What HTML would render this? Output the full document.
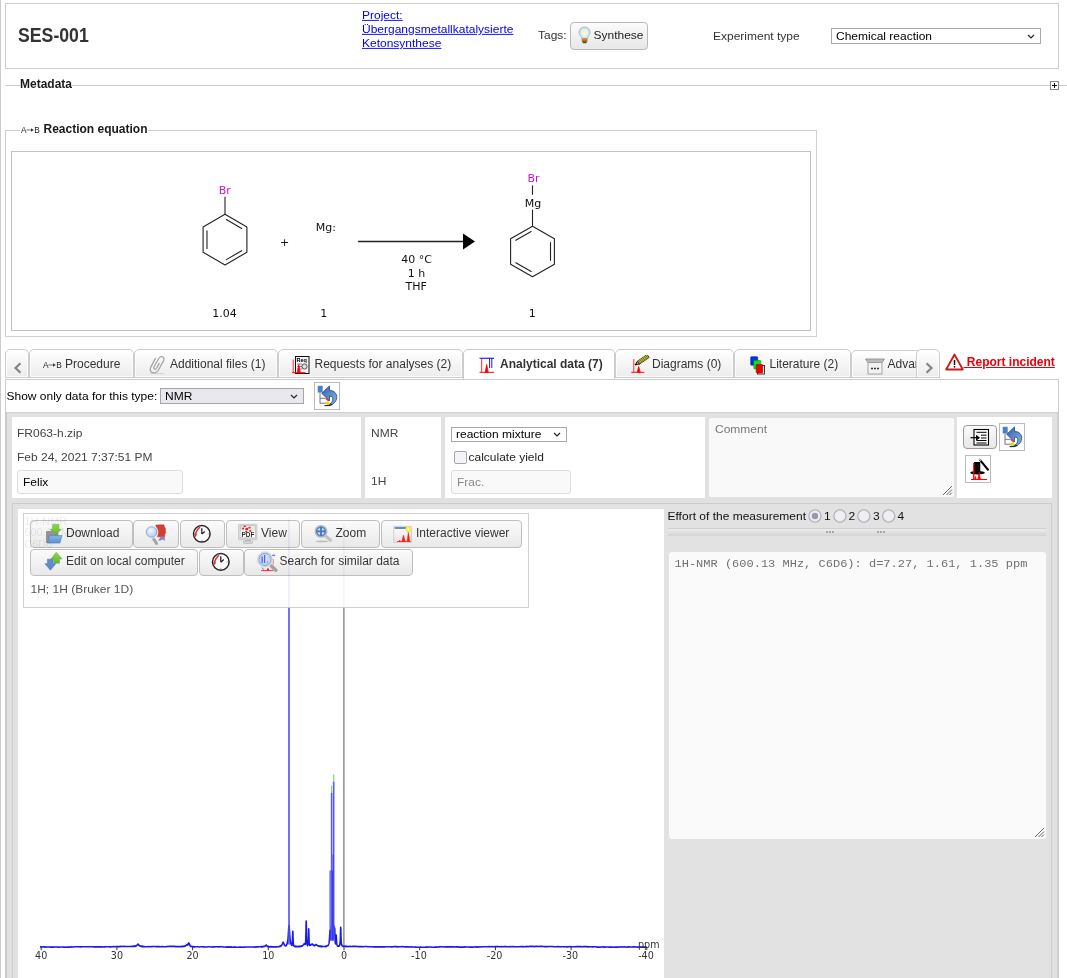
<!DOCTYPE html>
<html><head><meta charset="utf-8"><title>SES-001</title>
<style>
*{box-sizing:border-box;margin:0;padding:0}
html,body{width:1067px;height:978px;overflow:hidden;background:#fff}
body{font-family:"Liberation Sans",sans-serif;font-size:12px;color:#333;position:relative}
.abs{position:absolute}
.t{position:absolute;white-space:nowrap;line-height:14px}
.h{transform:scaleY(.9);transform-origin:0 11.160px}
.btn{position:absolute;border:1px solid #b9b9b9;border-radius:4px;background:linear-gradient(#fbfbfb,#e7e7e7);height:28px}
.btn .t{color:#222;top:4.800px}
.btn svg{position:absolute}
.sel{position:absolute;border:1px solid #a9a9a9;background:#fff}
.sel .t{color:#000;left:4px}
.sel svg{position:absolute;right:5px;top:5px}
.tab{position:absolute;top:349px;height:29px;border:1px solid #ccc;border-radius:5px 5px 0 0;background:linear-gradient(#fff,#ececec);box-shadow:inset 0 0 0 1px rgba(255,255,255,.75)}
.tab .t{top:7px;color:#333}
.tab svg{position:absolute}
.cell{position:absolute;background:#fff;top:417px;height:81px}
.ib{position:absolute;border:1px solid #bbb;background:#fff}
.rad{position:absolute;width:13.500px;height:13.500px;border:1.300px solid #b3b3bf;border-radius:50%;background:#efeff2;top:509.200px}
svg text{font-family:"DejaVu Sans",sans-serif}
#w{position:relative;width:1067px;height:978px;overflow:hidden;will-change:transform;background:#fff}
</style></head><body><div id="w">
<!-- left page line -->
<div class="abs" style="left:0;top:0;width:1px;height:978px;background:#ccc"></div>

<!-- header box -->
<div class="abs" style="left:5px;top:3px;width:1054px;height:66px;border:1px solid #ccc"></div>
<div class="t" style="left:17.5px;top:23px;font-size:20px;font-weight:bold;line-height:24px;transform:scaleX(.884);transform-origin:0 0">SES-001</div>
<div class="t h" style="left:362px;top:8px;color:#00e;text-decoration:underline">Project:</div><div class="t h" style="left:362px;top:22px;color:#00e;text-decoration:underline">Übergangsmetallkatalysierte</div><div class="t h" style="left:362px;top:36px;color:#00e;text-decoration:underline">Ketonsynthese</div>
<div class="t h" style="left:538px;top:28px">Tags:</div>
<div class="btn" style="left:570px;top:22px;width:78px"><div class="t h" style="left:22.500px;top:5px">Synthese</div>
<svg style="left:6.800px;top:2.600px" width="13.200" height="18.500" viewBox="0 0 15 21"><defs><radialGradient id="bulb" cx=".5" cy=".5" r=".6"><stop offset="0" stop-color="#fffcc8"/><stop offset=".4" stop-color="#eef4d8"/><stop offset=".75" stop-color="#c4dcf2"/><stop offset="1" stop-color="#8ab4de"/></radialGradient></defs><path d="M7.5 1C3.6 1 1.2 3.8 1.2 7c0 2.6 1.6 3.8 2.5 5.6.4.8.5 1.6.5 2.2h6.6c0-.6.1-1.4.5-2.2.9-1.8 2.5-3 2.5-5.6 0-3.2-2.400-6-6.300-6z" fill="url(#bulb)" stroke="#8fb7d9" stroke-width=".8"/><rect x="4.300" y="14.200" width="6.400" height="4" rx="1" fill="#b06a12"/><rect x="5.200" y="17.800" width="4.600" height="1.800" rx=".8" fill="#6e3c06"/><path d="M4.300 15.600h6.400" stroke="#e0a040" stroke-width=".7"/></svg></div>
<div class="t h" style="left:713px;top:29px">Experiment type</div>
<div class="sel" style="left:831px;top:28px;width:210px;height:16px"><div class="t h" style="top:0">Chemical reaction</div><svg width="8" height="6" viewBox="0 0 8 6"><path d="M1 1l3 3 3-3" fill="none" stroke="#222" stroke-width="1.200"/></svg></div>

<!-- Metadata -->
<div class="abs" style="left:5px;top:85px;width:1062px;height:1px;background:#ccc"></div>
<div class="t" style="left:20px;top:77px;font-weight:bold;color:#1a1a1a;background:#fff">Metadata</div>
<div class="abs" style="left:1050px;top:81px;width:9px;height:9px;border:1px solid #888;background:#fff"><div class="abs" style="left:1px;top:3px;width:5px;height:1px;background:#000"></div><div class="abs" style="left:3px;top:1px;width:1px;height:5px;background:#000"></div></div>

<!-- Reaction equation -->
<div class="abs" style="left:5px;top:130px;width:812px;height:207px;border:1px solid #d0d0d0"></div>
<div class="t" style="left:20px;top:122px;font-weight:bold;color:#1a1a1a;background:#fff;padding:0 0 0 23.500px">Reaction equation<svg style="position:absolute;left:1px;top:4px" width="19" height="8" viewBox="0 0 19 8"><text x="0" y="7" font-size="8.300" fill="#222" style="font-family:'Liberation Sans',sans-serif;font-weight:normal">A</text><text x="13.200" y="7" font-size="8.300" fill="#222" style="font-family:'Liberation Sans',sans-serif;font-weight:normal">B</text><path d="M5.300 4h5.500" stroke="#777" stroke-width="1"/><path d="M10 2.300l2.800 1.700l-2.800 1.700z" fill="#333"/></svg></div>
<div class="abs" style="left:11px;top:151px;width:800px;height:180px;border:1px solid #c2c2c2"></div>
<!--SCHEME_S-->
<svg class="abs" style="left:0;top:0" width="1067" height="345" viewBox="0 0 1067 345">
<g stroke="#222" stroke-width="1.1" stroke-linejoin="round" stroke-linecap="round">
<polygon points="225.00,214.30 246.91,226.95 246.91,252.25 225.00,264.90 203.09,252.25 203.09,226.95" fill="none"/>
<line x1="226.34" y1="219.57" x2="241.67" y2="228.43"/>
<line x1="241.67" y1="250.77" x2="226.34" y2="259.63"/>
<line x1="206.99" y1="248.45" x2="206.99" y2="230.75"/>
<line x1="225" y1="214.3" x2="225" y2="197"/>
<polygon points="532.50,226.20 554.41,238.85 554.41,264.15 532.50,276.80 510.59,264.15 510.59,238.85" fill="none"/>
<line x1="550.51" y1="242.64" x2="550.51" y2="260.35"/>
<line x1="531.16" y1="271.53" x2="515.83" y2="262.67"/>
<line x1="515.83" y1="240.33" x2="531.16" y2="231.47"/>
<line x1="532.5" y1="226.2" x2="532.5" y2="210"/>
<line x1="532.5" y1="194.2" x2="532.5" y2="185.7"/>
<line x1="358.5" y1="241.5" x2="464" y2="241.5" stroke-width="1.3"/>
</g>
<polygon points="463,233.6 475,241.5 463,249.4" fill="#000"/>
<g font-size="11px" fill="#111" text-anchor="middle">
<text x="224.8" y="194" fill="#c818c8">Br</text>
<text x="284.6" y="245.6">+</text>
<text x="325.800" y="231.300">Mg:</text>
<text x="224.400" y="316.800">1.04</text>
<text x="323.800" y="316.800">1</text>
<text x="416.600" y="263">40 °C</text>
<text x="416.600" y="276.800">1 h</text>
<text x="416.200" y="289.800">THF</text>
<text x="533.600" y="181.900" fill="#c818c8">Br</text>
<text x="533.100" y="206.600">Mg</text>
<text x="532.300" y="316.800">1</text>
</g></svg>
<!--SCHEME_E-->

<!-- tab strip -->
<div class="abs" style="left:5px;top:377px;width:935px;height:1px;background:#ccc"></div>
<div class="tab" style="left:5px;width:24px"><svg style="left:7px;top:12px" width="10" height="12" viewBox="0 0 10 12"><path d="M7.500 1.200L2.500 6l5 4.800" fill="none" stroke="#858585" stroke-width="2.200"/></svg></div>
<div class="tab" style="left:29px;width:105px"><svg style="left:13px;top:11.300px" width="19" height="8" viewBox="0 0 19 8"><text x="0" y="7" font-size="8.300" fill="#222" style="font-family:'Liberation Sans',sans-serif">A</text><text x="13.200" y="7" font-size="8.300" fill="#222" style="font-family:'Liberation Sans',sans-serif">B</text><path d="M5.300 4h5.500" stroke="#777" stroke-width="1"/><path d="M10 2.300l2.800 1.700l-2.800 1.700z" fill="#333"/></svg><div class="t" style="left:35px">Procedure</div></div>
<div class="tab" style="left:134px;width:144px"><svg style="left:13px;top:5px" width="19" height="20" viewBox="0 0 19 20"><ellipse cx="9" cy="18.400" rx="8" ry=".7" fill="#d4d4d4"/><path d="M7.400 3.400L2.600 12.600C1 16 4 18.500 7 17.800C8.500 17.400 9.300 16.800 10.200 15.500L15.600 5.600C17 3 14.800 .8 12.600 1.800C11.800 2.200 11.200 2.800 10.600 3.800L6 11.800C5.200 13.500 6.600 14.800 7.800 14C8.200 13.700 8.500 13.300 8.800 12.800L11.200 8.400" fill="none" stroke="#a3a5a1" stroke-width="1.250" stroke-linecap="round" stroke-linejoin="round"/></svg><div class="t" style="left:35px">Additional files (1)</div></div>
<div class="tab" style="left:278px;width:185px"><svg style="left:12px;top:6px" width="20" height="19" viewBox="0 0 20 19"><rect x="4.500" y=".5" width="13.500" height="17" fill="#f4f4f4" stroke="#111"/><text x="5.500" y="5.800" font-size="5.500" font-weight="bold" fill="#000" style="font-family:'Liberation Sans',sans-serif">Req</text><path d="M6 8h5M6 10.500h5M6 13h5" stroke="#777" stroke-width=".8"/><circle cx="13.500" cy="10.500" r="2.600" fill="#ddd" stroke="#444" stroke-width=".9"/><path d="M2.200 3.500V16.500" stroke="#f33" stroke-width="1"/><path d="M1 16.700h13.500" stroke="#f00" stroke-width="1"/><path d="M6.300 16.500L7.800 8.500 9.300 16.500z" fill="#f00" stroke="#f00" stroke-width=".8"/></svg><div class="t" style="left:35.5px">Requests for analyses (2)</div></div>
<div class="tab" style="left:463px;width:152px;height:30px;background:#fff;border-bottom:none"><svg style="left:15px;top:7px" width="16" height="17" viewBox="0 0 16 17"><path d="M.5 1.300H15" stroke="#22f" stroke-width="1.200"/><path d="M10.600 1.300V11M12.800 1.300V11" stroke="#00f" stroke-width=".9"/><path d="M2.700 2V15.500" stroke="#f22" stroke-width="1"/><path d="M.5 15.300h14.500" stroke="#f00" stroke-width="1"/><path d="M6.200 15.300L7.700 7.500 9.200 15.300z" fill="#f00" stroke="#f00" stroke-width=".8"/></svg><div class="t" style="left:36px;font-weight:bold">Analytical data (7)</div></div>
<div class="tab" style="left:615px;width:119px"><svg style="left:15px;top:5px" width="19" height="19" viewBox="0 0 19 19"><path d="M2.800 4V17.200" stroke="#f33" stroke-width="1"/><path d="M.3 17.300h13" stroke="#f00" stroke-width="1"/><path d="M6.200 17.200L7.700 11.500 9.200 17.200z" fill="#f00" stroke="#f00" stroke-width=".8"/><path d="M6.300 6.250L16.200 -.5L18.200 2.500L8.300 9.250z" fill="#ece020" stroke="#222" stroke-width=".8"/><path d="M7 7.300l10 -6.800M7.700 8.400l10 -6.800" stroke="#333" stroke-width=".6"/><path d="M4 10L6.300 6.250L8.300 9.250z" fill="#d8a878" stroke="#111" stroke-width=".8"/><path d="M4 10l1.300 -2.100l1.100 1.700z" fill="#000"/></svg><div class="t" style="left:36px">Diagrams (0)</div></div>
<div class="tab" style="left:734px;width:117px"><svg style="left:15px;top:6px" width="16" height="19" viewBox="0 0 16 19"><rect x="7.500" y="9.500" width="7" height="8.500" fill="#fff" stroke="#222" stroke-width=".9"/><rect x=".7" y=".7" width="7" height="8.500" rx=".8" fill="#03d" stroke="#02a" stroke-width=".6"/><rect x="3.800" y="4.500" width="7" height="8.500" rx=".8" fill="#1d1" stroke="#0a0" stroke-width=".6"/><rect x="6.200" y="8.500" width="6.500" height="8.500" rx=".8" fill="#e00" stroke="#a00" stroke-width=".6"/></svg><div class="t" style="left:34.5px">Literature (2)</div></div>
<div class="tab" style="left:851px;width:71px;overflow:hidden;top:350px;height:28px"><svg style="left:13px;top:7px" width="20" height="17" viewBox="0 0 20 17"><path d="M.5 1h19l-2.500 3.500h-14z" fill="#bbb" stroke="#888" stroke-width=".8"/><rect x="3" y="4.500" width="14" height="11.500" fill="#f2f2f2" stroke="#999" stroke-width=".9"/><path d="M6 10.500h2M9 10.500h2M12 10.500h2" stroke="#333" stroke-width="1.600"/></svg><div class="t" style="left:35.5px;top:6px">Advanced</div></div>
<div class="tab" style="left:916px;width:24px;z-index:2"><svg style="left:7px;top:12px" width="10" height="12" viewBox="0 0 10 12"><path d="M2.500 1.200L7.500 6l-5 4.800" fill="none" stroke="#858585" stroke-width="2.200"/></svg></div>
<svg class="abs" style="left:945px;top:353px" width="19" height="18" viewBox="0 0 19 18"><path d="M9.500 1.500L17.800 16.500H1.200z" fill="#fff" stroke="#d01818" stroke-width="1.800" stroke-linejoin="round"/><path d="M9.500 7v5" stroke="#111" stroke-width="1.500"/><circle cx="9.500" cy="13.800" r=".9" fill="#111"/></svg>
<div class="t" style="left:963.500px;top:355px;font-weight:bold;color:#e8000a;text-decoration:underline;font-size:12px;white-space:pre"> Report incident</div>
<!-- main panel -->
<div class="abs" style="left:5px;top:379px;width:1054px;height:600px;border:1px solid #ccc;background:#fff"></div>
<div class="t h" style="left:6.500px;top:389px;color:#000">Show only data for this type:</div>
<div class="sel" style="left:160px;top:388px;width:144px;height:16px;background:#e9e9ed;border-color:#a5a5ad"><div class="t h" style="top:0">NMR</div><svg width="8" height="6" viewBox="0 0 8 6"><path d="M1 1l3 3 3-3" fill="none" stroke="#222" stroke-width="1.200"/></svg></div>
<div class="ib" style="left:314px;top:382px;width:26px;height:28px"></div>

<!-- gray data area -->
<div class="abs" style="left:6px;top:412px;width:1052px;height:566px;background:#e1e1e1;border-top:1px solid #d0d0d0"></div>
<div class="abs" style="left:6px;top:412px;width:1px;height:566px;background:#c8c8c8"></div>
<div class="cell" style="left:12px;width:349px"></div>
<div class="cell" style="left:365px;width:76px"></div>
<div class="cell" style="left:445px;width:260px"></div>
<div class="cell" style="left:957px;width:95px"></div>
<div class="t h" style="left:17px;top:426px;color:#444">FR063-h.zip</div>
<div class="t h" style="left:17px;top:450px;color:#444">Feb 24, 2021 7:37:51 PM</div>
<div class="abs" style="left:17px;top:470px;width:166px;height:24px;border:1px solid #ddd;border-radius:3px;background:#f9f9f9"></div>
<div class="t h" style="left:23px;top:475px;color:#000">Felix</div>
<div class="t h" style="left:371px;top:426px;color:#444">NMR</div>
<div class="t h" style="left:371px;top:474px;color:#444">1H</div>
<div class="sel" style="left:451px;top:427px;width:116px;height:15px"><div class="t h" style="top:-1px;left:4px">reaction mixture</div><svg width="8" height="6" viewBox="0 0 8 6" style="top:4px"><path d="M1 1l3 3 3-3" fill="none" stroke="#222" stroke-width="1.200"/></svg></div>
<div class="abs" style="left:454px;top:451px;width:13px;height:13px;border:1px solid #a5a5b0;border-radius:2px;background:#f4f4f6"></div>
<div class="t h" style="left:468.500px;top:450px;color:#222">calculate yield</div>
<div class="abs" style="left:451px;top:470px;width:120px;height:24px;border:1px solid #ddd;border-radius:3px;background:#f9f9f9"></div>
<div class="t h" style="left:457px;top:475px;color:#888">Frac.</div>
<!-- comment textarea -->
<div class="abs" style="left:709px;top:418px;width:245px;height:79px;background:#f9f9f9;border-radius:2px"></div>
<div class="t h" style="left:715px;top:422px;color:#777">Comment</div>
<svg class="abs" style="left:942px;top:485px" width="11" height="11" viewBox="0 0 11 11"><path d="M1 10L10 1M4.500 10L10 4.500M7.500 10L10 7.500" stroke="#666" stroke-width="1"/></svg>
<!-- right buttons -->
<div class="btn" style="left:963px;top:425px;width:34px;height:24px;border-color:#999"><svg style="left:5.200px;top:2px" width="22" height="19" viewBox="0 0 22 19"><rect x="5" y="1.500" width="14.500" height="15.500" fill="#fdfdfd" stroke="#000" stroke-width="1.100"/><path d="M7.500 4.300h10M12 7.200h5.500M12 10h5.500M7.500 12.500h10M7.500 15h10" stroke="#000" stroke-width="1"/><path d="M1.500 9.700h8.500" stroke="#000" stroke-width="1.200"/><path d="M7 6.700l4 3-4 3z" fill="#000"/></svg></div>
<div class="ib" style="left:999px;top:423px;width:26px;height:28px"></div>
<div class="ib" style="left:965px;top:455px;width:26px;height:28px"><svg class="abs" style="left:2px;top:2px" width="21" height="23" viewBox="0 0 21 23"><rect x="6" y="4" width="6.300" height="11" fill="#000"/><ellipse cx="9.500" cy="14.800" rx="7.300" ry="1.700" fill="#000"/><path d="M11.500 1.300l9 11" stroke="#000" stroke-width="2"/><path d="M11.200 .8l1.600 1.900" stroke="#bbb" stroke-width="1.600"/><path d="M5.800 5v16.500" stroke="#f00" stroke-width="1.400"/><path d="M3 21.500h16" stroke="#f00" stroke-width="1"/><path d="M9.800 21.500l1.300-7 1.300 7zM6.600 21.500l.8-3 .8 3z" fill="#f00" stroke="#f00" stroke-width=".8"/></svg></div>

<!-- second row panel -->
<div class="abs" style="left:12px;top:503px;width:1040px;height:480px;border:1px solid #ccc;background:#e2e2e2"></div>
<div class="abs" style="left:18px;top:508.500px;width:646px;height:470px;background:#fff"></div>
<svg class="abs" style="left:18px;top:508.500px" width="646" height="469.500" viewBox="18 508.500 646 469.500">
<path d="M343.900 523V946" stroke="#777" stroke-width="1.250"/>
<path d="M40.0 946.4 L41.5 946.4 L43.0 946.5 L44.5 946.4 L46.0 946.6 L47.5 946.5 L49.0 946.5 L50.5 946.6 L52.0 946.5 L53.5 946.6 L55.0 946.5 L56.5 946.5 L58.0 946.6 L59.5 946.7 L61.0 946.5 L62.5 946.5 L64.0 946.6 L65.5 946.7 L67.0 946.6 L68.5 946.5 L70.0 946.6 L71.5 946.3 L73.0 946.5 L74.5 946.3 L76.0 946.3 L77.5 946.2 L79.0 946.3 L80.5 946.4 L82.0 946.2 L83.5 946.3 L85.0 946.3 L86.5 946.3 L88.0 946.3 L89.5 946.2 L91.0 946.2 L92.5 946.3 L94.0 946.4 L95.5 946.4 L97.0 946.3 L98.5 946.4 L100.0 946.4 L101.5 946.3 L103.0 946.5 L104.5 946.4 L106.0 946.3 L107.5 946.3 L109.0 946.3 L110.5 946.4 L112.0 946.3 L113.5 946.1 L115.0 946.3 L116.5 946.0 L118.0 946.1 L119.5 946.1 L121.0 945.9 L122.5 946.0 L124.0 945.8 L125.5 946.0 L127.0 946.0 L128.5 946.0 L130.0 946.0 L131.5 945.9 L133.0 945.9 L133.1 945.9 L133.2 945.9 L133.3 945.9 L133.4 946.0 L133.5 946.0 L133.6 945.8 L133.7 945.9 L133.8 945.7 L133.9 945.9 L134.0 945.9 L134.1 946.0 L134.2 945.9 L134.3 945.7 L134.4 945.8 L134.5 945.8 L134.6 945.6 L134.7 945.7 L134.8 945.6 L134.9 945.6 L135.0 945.6 L135.1 945.8 L135.2 945.6 L135.3 945.6 L135.4 945.6 L135.5 945.7 L135.6 945.4 L135.7 945.5 L135.8 945.5 L135.9 945.6 L136.0 945.5 L136.1 945.5 L136.2 945.3 L136.3 945.3 L136.4 945.2 L136.5 945.3 L136.6 945.2 L136.7 944.9 L136.8 944.8 L136.9 944.7 L137.0 944.6 L137.1 944.6 L137.2 944.5 L137.3 944.3 L137.4 944.1 L137.5 944.1 L137.6 944.0 L137.7 943.9 L137.8 944.0 L137.9 943.8 L138.0 943.8 L138.1 943.8 L138.2 943.9 L138.3 943.8 L138.4 944.1 L138.5 944.2 L138.6 944.3 L138.7 944.4 L138.8 944.5 L138.9 944.6 L139.0 944.6 L139.1 944.9 L139.2 944.8 L139.3 944.9 L139.4 945.0 L139.5 945.1 L139.6 945.2 L139.7 945.2 L139.8 945.2 L139.9 945.3 L140.0 945.4 L140.1 945.5 L140.2 945.4 L140.3 945.7 L140.4 945.7 L140.5 945.6 L140.6 945.6 L140.7 945.7 L140.8 945.7 L140.9 945.7 L141.0 945.9 L141.1 946.0 L141.2 945.8 L141.3 945.8 L141.4 945.7 L141.5 945.8 L141.6 945.8 L141.7 945.8 L141.8 946.0 L141.9 945.8 L142.0 945.8 L142.1 946.1 L142.2 946.0 L142.3 945.9 L142.4 946.0 L142.5 945.8 L142.6 946.0 L142.7 946.1 L142.8 946.1 L142.9 946.1 L143.0 945.9 L143.1 946.0 L143.2 945.9 L143.3 946.1 L143.4 946.0 L143.5 946.1 L143.6 946.0 L143.7 946.0 L143.8 946.1 L143.9 946.2 L144.0 946.2 L144.1 946.1 L145.6 946.2 L147.1 946.2 L148.6 946.1 L150.1 946.2 L151.6 946.1 L153.1 946.0 L154.6 946.0 L156.1 946.1 L157.6 946.0 L159.1 946.1 L160.6 946.2 L162.1 946.0 L163.6 946.2 L165.1 946.2 L166.6 946.1 L168.1 946.0 L169.6 945.9 L171.1 945.9 L172.6 945.9 L174.1 945.9 L175.6 946.1 L177.1 946.1 L178.6 946.1 L180.1 946.0 L181.6 946.1 L181.7 946.1 L181.8 945.9 L181.9 946.1 L182.0 946.1 L182.1 946.1 L182.2 946.1 L182.3 946.0 L182.4 945.9 L182.5 946.1 L182.6 945.9 L182.7 946.1 L182.8 946.1 L182.9 945.9 L183.0 945.9 L183.1 946.1 L183.2 946.0 L183.3 945.8 L183.4 945.8 L183.5 945.8 L183.6 946.0 L183.7 946.0 L183.8 945.8 L183.9 945.9 L184.0 946.0 L184.1 945.9 L184.2 945.7 L184.3 945.8 L184.4 945.6 L184.5 945.6 L184.6 945.8 L184.7 945.7 L184.8 945.6 L184.9 945.7 L185.0 945.5 L185.1 945.6 L185.2 945.5 L185.3 945.3 L185.4 945.2 L185.5 945.2 L185.6 945.1 L185.7 945.1 L185.8 945.0 L185.9 944.9 L186.0 944.8 L186.1 944.9 L186.2 944.7 L186.3 944.6 L186.4 944.6 L186.5 944.6 L186.6 944.4 L186.7 944.5 L186.8 944.3 L186.9 944.3 L187.0 944.3 L187.1 944.2 L187.2 944.3 L187.3 944.3 L187.4 944.3 L187.5 944.6 L187.6 944.5 L187.7 944.5 L187.8 944.4 L187.9 944.1 L188.0 943.8 L188.1 943.6 L188.2 943.3 L188.3 943.1 L188.4 942.6 L188.5 942.5 L188.6 942.3 L188.7 942.3 L188.8 942.5 L188.9 942.5 L189.0 942.8 L189.1 943.1 L189.2 943.4 L189.3 943.6 L189.4 943.9 L189.5 944.1 L189.6 944.4 L189.7 944.6 L189.8 944.7 L189.9 944.9 L190.0 945.1 L190.1 945.3 L190.2 945.4 L190.3 945.5 L190.4 945.6 L190.5 945.5 L190.6 945.7 L190.7 945.8 L190.8 945.9 L190.9 945.7 L191.0 945.7 L191.1 945.9 L191.2 945.8 L191.3 945.9 L191.4 945.9 L191.5 946.1 L191.6 946.1 L191.7 946.2 L191.8 946.0 L191.9 946.2 L192.0 946.2 L192.1 946.0 L192.2 946.3 L192.3 946.3 L192.4 946.1 L192.5 946.3 L192.6 946.2 L192.7 946.2 L192.8 946.4 L192.9 946.3 L193.0 946.1 L193.1 946.2 L193.2 946.3 L193.3 946.2 L193.4 946.2 L193.5 946.2 L193.6 946.3 L193.7 946.1 L193.8 946.3 L193.9 946.3 L194.0 946.2 L194.1 946.3 L194.2 946.3 L194.3 946.3 L194.4 946.2 L194.5 946.5 L194.6 946.4 L194.7 946.5 L194.8 946.2 L196.3 946.3 L197.8 946.3 L199.3 946.5 L200.8 946.3 L202.3 946.3 L203.8 946.4 L205.3 946.5 L206.8 946.5 L208.3 946.3 L209.8 946.2 L211.3 946.5 L212.8 946.4 L214.3 946.4 L215.8 946.2 L217.3 946.2 L218.8 946.4 L220.3 946.3 L221.8 946.3 L223.3 946.5 L224.8 946.5 L226.3 946.6 L227.8 946.4 L229.3 946.6 L230.8 946.4 L232.3 946.7 L233.8 946.6 L235.3 946.6 L236.8 946.7 L238.3 946.8 L239.8 946.6 L241.3 946.6 L242.8 946.7 L244.3 946.6 L245.8 946.5 L247.3 946.5 L248.8 946.5 L250.3 946.5 L251.8 946.5 L253.3 946.5 L254.8 946.6 L256.3 946.4 L257.8 946.4 L259.3 946.3 L260.8 946.3 L260.9 946.2 L261.0 946.3 L261.1 946.2 L261.2 946.4 L261.3 946.3 L261.4 946.2 L261.5 946.3 L261.6 946.4 L261.7 946.2 L261.8 946.4 L261.9 946.3 L262.0 946.3 L262.1 946.4 L262.2 946.2 L262.3 946.3 L262.4 946.3 L262.5 946.4 L262.6 946.2 L262.7 946.3 L262.8 946.3 L262.9 946.3 L263.0 946.2 L263.1 946.2 L263.2 946.1 L263.3 946.1 L263.4 946.0 L263.5 946.2 L263.6 946.1 L263.7 946.0 L263.8 946.0 L263.9 946.2 L264.0 946.1 L264.1 946.1 L264.2 945.9 L264.3 945.9 L264.4 945.8 L264.5 945.8 L264.6 945.7 L264.7 945.7 L264.8 945.6 L264.9 945.7 L265.0 945.7 L265.1 945.4 L265.2 945.3 L265.3 945.4 L265.4 945.1 L265.5 945.0 L265.6 944.8 L265.7 944.8 L265.8 944.7 L265.9 944.7 L266.0 944.6 L266.1 944.7 L266.2 944.6 L266.3 944.7 L266.4 944.8 L266.5 945.0 L266.6 945.0 L266.7 945.1 L266.8 945.3 L266.9 945.4 L267.0 945.5 L267.1 945.6 L267.2 945.8 L267.3 945.8 L267.4 945.9 L267.5 946.0 L267.6 945.9 L267.7 945.9 L267.8 946.1 L267.9 945.9 L268.0 946.1 L268.1 946.1 L268.2 945.9 L268.3 946.2 L268.4 946.2 L268.5 946.2 L268.6 946.2 L268.7 946.3 L268.8 946.1 L268.9 946.2 L269.0 946.2 L269.1 946.3 L269.2 946.3 L269.3 946.3 L269.4 946.3 L269.5 946.4 L269.6 946.3 L269.7 946.3 L269.8 946.2 L269.9 946.1 L270.0 946.2 L270.1 946.2 L270.2 946.2 L270.3 946.4 L270.4 946.3 L270.5 946.3 L270.6 946.4 L270.7 946.4 L270.8 946.3 L270.9 946.2 L271.0 946.4 L271.1 946.4 L271.2 946.3 L271.3 946.3 L271.4 946.4 L271.5 946.2 L271.6 946.4 L271.7 946.3 L271.8 946.2 L271.9 946.3 L272.0 946.4 L273.5 946.3 L275.0 946.4 L276.5 946.4 L278.0 946.2 L278.1 946.2 L278.2 946.2 L278.3 946.2 L278.4 946.3 L278.5 946.2 L278.6 946.2 L278.7 946.0 L278.8 946.0 L278.9 946.0 L279.0 946.2 L279.1 946.0 L279.2 946.1 L279.3 945.9 L279.4 945.9 L279.5 945.9 L279.6 946.0 L279.7 946.0 L279.8 946.0 L279.9 945.8 L280.0 945.9 L280.1 945.8 L280.2 945.8 L280.3 945.6 L280.4 945.8 L280.5 945.6 L280.6 945.8 L280.7 945.7 L280.8 945.3 L280.9 945.4 L281.0 945.4 L281.1 945.4 L281.2 945.1 L281.3 945.0 L281.4 944.9 L281.5 945.0 L281.6 944.6 L281.7 944.6 L281.8 944.3 L281.9 944.2 L282.0 944.1 L282.1 943.7 L282.2 943.6 L282.3 943.3 L282.4 943.2 L282.5 942.9 L282.6 942.5 L282.7 942.5 L282.8 942.1 L282.9 941.9 L283.0 941.8 L283.1 941.9 L283.2 941.9 L283.3 941.9 L283.4 942.0 L283.5 942.3 L283.6 942.5 L283.7 942.9 L283.8 942.9 L283.9 943.4 L284.0 943.6 L284.1 943.6 L284.2 944.1 L284.3 944.2 L284.4 944.5 L284.5 944.5 L284.6 944.6 L284.7 944.8 L284.8 945.1 L284.9 945.1 L285.0 945.1 L285.1 945.2 L285.2 945.3 L285.3 945.3 L285.4 945.4 L285.5 945.5 L285.6 945.3 L285.7 945.4 L285.8 945.1 L285.9 945.1 L286.0 945.1 L286.1 944.9 L286.2 944.8 L286.3 944.9 L286.4 944.7 L286.5 944.6 L286.6 944.4 L286.7 944.3 L286.8 944.1 L286.9 943.8 L287.0 943.6 L287.1 943.1 L287.2 943.0 L287.3 942.6 L287.4 942.3 L287.5 941.8 L287.6 941.1 L287.7 940.5 L287.8 940.0 L287.9 939.0 L288.0 938.1 L288.1 937.0 L288.2 935.7 L288.3 934.5 L288.4 933.0 L288.5 931.1 L288.6 929.5 L288.7 927.7 L288.8 926.4 L288.9 925.4 L289.0 925.0 L289.1 925.4 L289.2 926.3 L289.3 927.9 L289.4 929.4 L289.5 931.0 L289.6 932.9 L289.7 934.5 L289.8 935.8 L289.9 936.9 L290.0 938.0 L290.1 938.9 L290.2 939.8 L290.3 940.4 L290.4 941.1 L290.5 941.6 L290.6 942.2 L290.7 942.7 L290.8 943.0 L290.9 943.2 L291.0 943.4 L291.1 943.7 L291.2 943.9 L291.3 944.1 L291.4 944.1 L291.5 944.4 L291.6 944.7 L291.7 944.6 L291.8 944.8 L291.9 944.9 L292.0 944.6 L292.1 943.9 L292.2 943.2 L292.3 942.2 L292.4 940.7 L292.5 938.6 L292.6 935.7 L292.7 932.4 L292.8 930.9 L292.9 932.2 L293.0 935.4 L293.1 938.6 L293.2 940.9 L293.3 942.2 L293.4 943.3 L293.5 943.8 L293.6 944.4 L293.7 944.9 L293.8 945.2 L293.9 945.4 L294.0 945.6 L294.1 945.5 L294.2 945.5 L294.3 945.6 L294.4 945.8 L294.5 945.9 L294.6 946.0 L294.7 946.0 L294.8 946.0 L294.9 946.0 L295.0 945.9 L295.1 946.0 L295.2 945.8 L295.3 946.1 L295.4 945.9 L295.5 946.1 L295.6 946.0 L295.7 946.0 L295.8 945.9 L295.9 945.9 L296.0 946.1 L296.1 946.1 L296.2 945.9 L296.3 945.9 L296.4 946.1 L296.5 946.1 L296.6 946.0 L296.7 946.0 L296.8 946.1 L296.9 945.9 L297.0 946.0 L297.1 946.1 L297.2 946.2 L297.3 946.1 L297.4 946.2 L297.5 946.1 L297.6 946.0 L297.7 946.0 L297.8 946.2 L297.9 946.1 L298.0 946.0 L298.1 945.9 L298.2 946.1 L298.3 946.1 L298.4 946.1 L298.5 946.0 L298.6 946.1 L298.7 946.2 L298.8 946.0 L298.9 945.9 L299.0 946.0 L299.1 946.0 L299.2 946.1 L299.3 945.9 L299.4 946.1 L299.5 946.1 L299.6 946.0 L299.7 945.9 L299.8 946.1 L299.9 945.9 L300.0 946.0 L300.1 945.8 L300.2 945.8 L300.3 946.0 L300.4 945.8 L300.5 946.0 L300.6 945.8 L300.7 945.7 L300.8 945.7 L300.9 945.7 L301.0 945.8 L301.1 945.9 L301.2 945.6 L301.3 945.6 L301.4 945.6 L301.5 945.8 L301.6 945.5 L301.7 945.4 L301.8 945.4 L301.9 945.4 L302.0 945.5 L302.1 945.5 L302.2 945.4 L302.3 945.4 L302.4 945.3 L302.5 945.1 L302.6 945.0 L302.7 945.1 L302.8 945.0 L302.9 944.7 L303.0 944.8 L303.1 944.6 L303.2 944.5 L303.3 944.4 L303.4 944.2 L303.5 944.0 L303.6 944.0 L303.7 943.9 L303.8 944.0 L303.9 943.6 L304.0 943.7 L304.1 943.4 L304.2 943.4 L304.3 943.5 L304.4 943.4 L304.5 943.3 L304.6 943.2 L304.7 943.3 L304.8 943.4 L304.9 943.6 L305.0 943.5 L305.1 943.6 L305.2 943.9 L305.3 943.7 L305.4 943.3 L305.5 942.7 L305.6 941.6 L305.7 939.8 L305.8 937.5 L305.9 934.0 L306.0 929.3 L306.1 923.3 L306.2 920.6 L306.3 923.5 L306.4 929.1 L306.5 934.1 L306.6 937.8 L306.7 940.0 L306.8 941.4 L306.9 942.6 L307.0 943.2 L307.1 943.7 L307.2 944.1 L307.3 944.6 L307.4 944.9 L307.5 945.0 L307.6 945.1 L307.7 944.6 L307.8 944.4 L307.9 944.1 L308.0 943.8 L308.1 943.0 L308.2 941.8 L308.3 940.2 L308.4 937.8 L308.5 934.4 L308.6 930.6 L308.7 928.4 L308.8 930.5 L308.9 934.5 L309.0 938.0 L309.1 940.3 L309.2 941.9 L309.3 942.8 L309.4 943.6 L309.5 944.1 L309.6 944.6 L309.7 944.6 L309.8 944.9 L309.9 945.0 L310.0 944.8 L310.1 944.7 L310.2 944.6 L310.3 944.7 L310.4 944.6 L310.5 944.7 L310.6 944.6 L310.7 944.6 L310.8 944.3 L310.9 944.1 L311.0 944.1 L311.1 944.1 L311.2 944.1 L311.3 944.0 L311.4 943.8 L311.5 943.8 L311.6 943.9 L311.7 943.8 L311.8 943.8 L311.9 943.8 L312.0 943.8 L312.1 943.6 L312.2 943.9 L312.3 943.7 L312.4 943.8 L312.5 943.8 L312.6 944.0 L312.7 943.9 L312.8 944.0 L312.9 944.0 L313.0 944.1 L313.1 944.4 L313.2 944.4 L313.3 944.4 L313.4 944.5 L313.5 944.7 L313.6 944.6 L313.7 944.6 L313.8 944.9 L313.9 944.9 L314.0 945.0 L314.1 944.8 L314.2 945.0 L314.3 945.1 L314.4 945.2 L314.5 945.3 L314.6 944.9 L314.7 945.0 L314.8 944.8 L314.9 944.8 L315.0 944.9 L315.1 944.7 L315.2 944.8 L315.3 944.5 L315.4 944.6 L315.5 944.4 L315.6 944.3 L315.7 944.4 L315.8 944.4 L315.9 944.1 L316.0 944.3 L316.1 944.3 L316.2 944.2 L316.3 944.3 L316.4 944.3 L316.5 944.3 L316.6 944.4 L316.7 944.6 L316.8 944.7 L316.9 944.6 L317.0 944.7 L317.1 944.8 L317.2 945.0 L317.3 944.9 L317.4 945.0 L317.5 945.1 L317.6 945.3 L317.7 945.3 L317.8 945.2 L317.9 945.3 L318.0 945.4 L318.1 945.5 L318.2 945.5 L318.3 945.4 L318.4 945.5 L318.5 945.7 L318.6 945.6 L318.7 945.6 L318.8 945.6 L318.9 945.8 L319.0 945.7 L319.1 945.8 L319.2 945.7 L319.3 945.7 L319.4 945.9 L319.5 946.0 L319.6 945.8 L319.7 945.7 L319.8 945.9 L319.9 945.8 L320.0 945.7 L320.1 946.0 L320.2 945.9 L320.3 946.0 L320.4 945.9 L320.5 946.0 L320.6 945.9 L320.7 945.8 L320.8 945.8 L320.9 946.0 L321.0 946.0 L321.1 946.1 L321.2 945.8 L321.3 946.0 L321.4 945.9 L321.5 946.0 L321.6 945.9 L321.7 945.9 L321.8 946.0 L321.9 946.1 L322.0 945.9 L323.5 946.0 L325.0 946.0 L325.1 946.1 L325.2 945.8 L325.3 945.8 L325.4 946.0 L325.5 946.0 L325.6 945.9 L325.7 945.7 L325.8 946.0 L325.9 945.8 L326.0 945.9 L326.1 945.8 L326.2 945.9 L326.3 945.7 L326.4 945.8 L326.5 945.6 L326.6 945.7 L326.7 945.8 L326.8 945.7 L326.9 945.5 L327.0 945.5 L327.1 945.5 L327.2 945.5 L327.3 945.4 L327.4 945.3 L327.5 945.3 L327.6 945.3 L327.7 945.3 L327.8 945.0 L327.9 945.1 L328.0 945.0 L328.1 944.7 L328.2 944.8 L328.3 944.4 L328.4 944.4 L328.5 944.2 L328.6 944.0 L328.7 943.6 L328.8 943.3 L328.9 942.9 L329.0 942.4 L329.1 941.9 L329.2 941.1 L329.3 940.3 L329.4 939.1 L329.5 938.1 L329.6 936.6 L329.7 934.8 L329.8 933.2 L329.9 931.6 L330.0 930.3 L330.1 929.8 L330.2 930.3 L330.3 931.4 L330.4 933.0 L330.5 934.9 L330.6 936.4 L330.7 938.0 L330.8 939.2 L330.9 938.0 L331.0 937.0 L331.1 935.4 L331.2 934.0 L331.3 932.2 L331.4 930.1 L331.5 928.1 L331.6 926.5 L331.7 925.3 L331.8 925.0 L331.9 925.2 L332.0 926.6 L332.1 928.3 L332.2 930.2 L332.3 932.2 L332.4 933.8 L332.5 935.7 L332.6 936.9 L332.7 938.3 L332.8 939.3 L332.9 938.0 L333.0 937.0 L333.1 935.7 L333.2 933.8 L333.3 932.0 L333.4 930.2 L333.5 928.1 L333.6 926.6 L333.7 925.2 L333.8 925.0 L333.9 925.2 L334.0 926.5 L334.1 928.3 L334.2 930.0 L334.3 932.0 L334.4 933.9 L334.5 933.2 L334.6 929.3 L334.7 927.5 L334.8 929.3 L334.9 933.4 L335.0 936.9 L335.1 939.6 L335.2 941.1 L335.3 942.4 L335.4 942.6 L335.5 943.1 L335.6 943.3 L335.7 942.3 L335.8 941.3 L335.9 939.5 L336.0 937.5 L336.1 935.6 L336.2 934.5 L336.3 935.7 L336.4 937.5 L336.5 939.5 L336.6 941.3 L336.7 942.3 L336.8 943.4 L336.9 943.9 L337.0 944.3 L337.1 944.7 L337.2 944.9 L337.3 945.0 L337.4 945.3 L337.5 945.2 L337.6 945.5 L337.7 945.4 L337.8 945.6 L337.9 945.7 L338.0 945.6 L338.1 945.6 L338.2 945.6 L338.3 945.5 L338.4 945.5 L338.5 945.6 L338.6 945.7 L338.7 945.7 L338.8 945.7 L338.9 945.7 L339.0 945.4 L339.1 945.4 L339.2 945.4 L339.3 945.1 L339.4 945.0 L339.5 944.9 L339.6 944.7 L339.7 944.5 L339.8 944.1 L339.9 943.8 L340.0 943.1 L340.1 942.2 L340.2 941.0 L340.3 939.2 L340.4 936.3 L340.5 932.9 L340.6 928.7 L340.7 926.7 L340.8 928.6 L340.9 932.8 L341.0 936.6 L341.1 939.2 L341.2 941.0 L341.3 942.2 L341.4 943.0 L341.5 943.8 L341.6 944.2 L341.7 944.4 L341.8 944.8 L341.9 944.9 L342.0 945.2 L342.1 945.3 L342.2 945.3 L342.3 945.5 L342.4 945.4 L342.5 945.6 L342.6 945.6 L342.7 945.6 L342.8 945.6 L342.9 945.8 L343.0 945.6 L343.1 945.8 L343.2 945.9 L343.3 945.7 L343.4 945.7 L343.5 945.9 L343.6 945.9 L343.7 945.9 L343.8 946.0 L343.9 945.8 L344.0 945.8 L344.1 945.8 L344.2 945.8 L344.3 946.0 L344.4 946.0 L344.5 946.0 L344.6 945.8 L344.7 946.0 L344.8 946.0 L344.9 945.9 L345.0 946.0 L345.1 945.9 L345.2 945.9 L345.3 945.8 L345.4 945.9 L345.5 945.8 L345.6 945.9 L345.7 946.0 L345.8 946.0 L345.9 946.1 L346.0 946.0 L346.1 945.9 L346.2 946.0 L346.3 945.9 L346.4 946.0 L346.5 946.0 L346.6 945.9 L346.7 946.0 L348.2 946.1 L349.7 945.8 L351.2 946.0 L352.7 945.8 L354.2 945.9 L355.7 945.9 L357.2 946.0 L358.7 946.1 L360.2 946.1 L361.7 946.0 L363.2 946.2 L364.7 946.0 L366.2 946.0 L367.7 946.3 L369.2 946.2 L370.7 946.3 L372.2 946.3 L373.7 946.4 L375.2 946.3 L376.7 946.4 L378.2 946.4 L379.7 946.4 L381.2 946.3 L382.7 946.4 L384.2 946.4 L385.7 946.3 L387.2 946.2 L388.7 946.3 L390.2 946.2 L391.7 946.4 L393.2 946.2 L394.7 946.1 L396.2 946.1 L397.7 946.4 L399.2 946.2 L400.7 946.2 L402.2 946.1 L403.7 946.2 L405.2 946.4 L406.7 946.4 L408.2 946.4 L409.7 946.5 L411.2 946.3 L412.7 946.5 L414.2 946.5 L415.7 946.6 L417.2 946.7 L418.7 946.7 L420.2 946.5 L421.7 946.7 L423.2 946.8 L424.7 946.8 L426.2 946.5 L427.7 946.6 L429.2 946.5 L430.7 946.5 L432.2 946.7 L433.7 946.7 L435.2 946.6 L436.7 946.6 L438.2 946.5 L439.7 946.4 L441.2 946.3 L442.7 946.3 L444.2 946.5 L445.7 946.3 L447.2 946.4 L448.7 946.4 L450.2 946.3 L451.7 946.4 L453.2 946.4 L454.7 946.5 L456.2 946.4 L457.7 946.4 L459.2 946.6 L460.7 946.5 L462.2 946.6 L463.7 946.6 L465.2 946.4 L466.7 946.5 L468.2 946.5 L469.7 946.6 L471.2 946.5 L472.7 946.6 L474.2 946.5 L475.7 946.4 L477.2 946.6 L478.7 946.3 L480.2 946.5 L481.7 946.2 L483.2 946.2 L484.7 946.2 L486.2 946.3 L487.7 946.3 L489.2 946.0 L490.7 946.2 L492.2 946.1 L493.7 946.2 L495.2 946.0 L496.7 946.1 L498.2 946.1 L499.7 946.2 L501.2 946.1 L502.7 946.3 L504.2 946.1 L505.7 946.1 L507.2 946.3 L508.7 946.2 L510.2 946.1 L511.7 946.3 L513.2 946.1 L514.7 946.3 L516.2 946.3 L517.7 946.3 L519.2 946.2 L520.7 946.1 L522.2 946.1 L523.7 946.1 L525.2 946.2 L526.7 945.9 L528.2 946.2 L529.7 945.9 L531.2 945.9 L532.7 945.9 L534.2 946.1 L535.7 945.9 L537.2 945.9 L538.7 946.0 L540.2 945.9 L541.7 945.9 L543.2 946.0 L544.7 946.1 L546.2 946.1 L547.7 946.1 L549.2 946.0 L550.7 946.0 L552.2 946.0 L553.7 946.2 L555.2 946.2 L556.7 946.3 L558.2 946.1 L559.7 946.2 L561.2 946.3 L562.7 946.3 L564.2 946.2 L565.7 946.3 L567.2 946.4 L568.7 946.2 L570.2 946.1 L571.7 946.2 L573.2 946.3 L574.7 946.3 L576.2 946.1 L577.7 946.1 L579.2 946.1 L580.7 946.1 L582.2 946.2 L583.7 946.1 L585.2 946.1 L586.7 946.1 L588.2 946.4 L589.7 946.3 L591.2 946.2 L592.7 946.4 L594.2 946.2 L595.7 946.3 L597.2 946.6 L598.7 946.5 L600.2 946.6 L601.7 946.5 L603.2 946.4 L604.7 946.6 L606.2 946.5 L607.7 946.5 L609.2 946.6 L610.7 946.5 L612.2 946.6 L613.7 946.7 L615.2 946.6 L616.7 946.6 L618.2 946.6 L619.7 946.5 L621.2 946.4 L622.7 946.5 L624.2 946.4 L625.7 946.5 L627.2 946.6 L628.7 946.4 L630.2 946.5 L631.7 946.5 L633.2 946.4 L634.7 946.4 L636.2 946.5 L637.7 946.6 L639.2 946.6 L640.7 946.6 L642.2 946.6 L643.7 946.6 L645.2 946.6 L646.7 946.6" fill="none" stroke="#1a1aee" stroke-width="1.600" stroke-linejoin="round"/>
<path d="M289 520V944" stroke="#4e4ef3" stroke-width="1.600"/>
<path d="M331.600 792V940M333.700 781V940" stroke="#5a5af5" stroke-width="1.600"/>
<path d="M333.100 854V940M330.100 870V940M332.400 870V940" stroke="#3a3af2" stroke-width="1.100"/>
<path d="M331.600 785v7.500M333.700 774v7.500M289 516v4.500" stroke="#7be07b" stroke-width="1.300"/>
<g stroke="#333" stroke-width="1"><path d="M41.2 946.500v3.200"/><path d="M116.9 946.500v3.200"/><path d="M192.6 946.500v3.200"/><path d="M268.3 946.500v3.200"/><path d="M344.0 946.500v3.200"/><path d="M419.7 946.500v3.200"/><path d="M495.4 946.500v3.200"/><path d="M571.1 946.500v3.200"/><path d="M646.8 946.500v3.200"/></g>
<g font-size="9.600px" fill="#333" text-anchor="middle"><text x="41.2" y="958.500">40</text><text x="116.9" y="958.500">30</text><text x="192.6" y="958.500">20</text><text x="268.3" y="958.500">10</text><text x="344.0" y="958.500">0</text><text x="418.9" y="958.500">-10</text><text x="494.6" y="958.500">-20</text><text x="570.3" y="958.500">-30</text><text x="646.0" y="958.500">-40</text><text x="648.800" y="947.400">ppm</text></g>
<text x="24.300" y="524" font-size="11px" fill="#444" style="font-family:'Liberation Sans',sans-serif">1H-NMR</text><text x="24.300" y="535.500" font-size="11px" fill="#444" style="font-family:'Liberation Sans',sans-serif">600.13 MHz</text><text x="24.300" y="547" font-size="11px" fill="#444" style="font-family:'Liberation Sans',sans-serif">C6D6</text>
</svg>

<!-- toolbar -->
<div style="opacity:.9">
<div class="abs" style="left:23px;top:513px;width:506px;height:95px;border:1px solid #ccc;background:#fff"></div>
<div class="btn" style="left:30px;top:520px;height:28px;width:103px"><div class="t" style="left:35px">Download</div></div>
<div class="btn" style="left:133px;top:520px;height:28px;width:46px"></div>
<div class="btn" style="left:179.500px;top:520px;height:28px;width:45px"></div>
<div class="btn" style="left:225.500px;top:520px;height:28px;width:74px"><div class="t" style="left:34.5px">View</div></div>
<div class="btn" style="left:300.500px;top:520px;height:28px;width:79px"><div class="t" style="left:34px">Zoom</div></div>
<div class="btn" style="left:380.500px;top:520px;height:28px;width:141px"><div class="t" style="left:34.5px">Interactive viewer</div></div>
<div class="btn" style="left:30px;top:549px;height:27px;width:167.500px"><div class="t" style="left:35px;top:3.800px">Edit on local computer</div></div>
<div class="btn" style="left:198.500px;top:549px;height:27px;width:45px"></div>
<div class="btn" style="left:244px;top:549px;height:27px;width:169px"><div class="t" style="left:34.5px;top:3.800px">Search for similar data</div></div>
<div class="t h" style="left:30.500px;top:582px;color:#444">1H; 1H (Bruker 1D)</div>
</div>

<!-- right column -->
<div class="t h" style="left:667.500px;top:509px;color:#111">Effort of the measurement</div>
<svg class="abs" style="left:800px;top:505px" width="100" height="22" viewBox="800 505 100 22"><g fill="#efeff2" stroke="#b4b4c0" stroke-width="1.300"><circle cx="814.950" cy="516" r="6.100"/><circle cx="839.950" cy="516" r="6.100"/><circle cx="863.850" cy="516" r="6.100"/><circle cx="888.700" cy="516" r="6.100"/></g><circle cx="814.950" cy="516" r="3.200" fill="#9898a8"/></svg>
<div class="t h" style="left:824px;top:509px;color:#111">1</div>
<div class="t h" style="left:848.500px;top:509px;color:#111">2</div>
<div class="t h" style="left:873px;top:509px;color:#111">3</div>
<div class="t h" style="left:897.500px;top:509px;color:#111">4</div>
<div class="abs" style="left:668px;top:528px;width:378px;height:8px;background:linear-gradient(#ebebeb,#d4d4d4);border-top:1px solid #cfcfcf"></div>
<div class="abs" style="left:825.500px;top:531.200px;width:8px;height:1.800px;background:repeating-linear-gradient(90deg,#a8a8a8 0 2px,transparent 2px 3px)"></div>
<div class="abs" style="left:877.300px;top:531.200px;width:8px;height:1.800px;background:repeating-linear-gradient(90deg,#a8a8a8 0 2px,transparent 2px 3px)"></div>
<div class="abs" style="left:669px;top:552px;width:377px;height:287px;background:#fafafa;border-radius:3px"></div>
<div class="t" style="left:674.500px;top:557px;font-family:'Liberation Mono',monospace;color:#707070;font-size:12px;transform:scaleY(.88);transform-origin:0 10.200px">1H-NMR (600.13 MHz, C6D6): d=7.27, 1.61, 1.35 ppm</div>
<svg class="abs" style="left:1034px;top:827px" width="11" height="11" viewBox="0 0 11 11"><path d="M1 10L10 1M4.500 10L10 4.500M7.500 10L10 7.500" stroke="#666" stroke-width="1"/></svg>
<!-- right edge -->
<div class="abs" style="left:1057px;top:413px;width:1px;height:566px;background:#d2d2d2"></div><div class="abs" style="left:1058px;top:379px;width:1px;height:600px;background:#ccc"></div>
<!-- icon overlay, page coordinates -->
<svg class="abs" style="left:0;top:0;pointer-events:none;z-index:5" width="1067" height="978" viewBox="0 0 1067 978">
<defs>
<linearGradient id="gBlue" x1="0" y1="0" x2="1" y2="1"><stop offset="0" stop-color="#2f62ad"/><stop offset="1" stop-color="#8db4e4"/></linearGradient>
<linearGradient id="gGreen" x1="0" y1="0" x2="0" y2="1"><stop offset="0" stop-color="#8ad42e"/><stop offset="1" stop-color="#58b020"/></linearGradient>
<linearGradient id="gFold" x1="0" y1="0" x2="0" y2="1"><stop offset="0" stop-color="#7fb0e6"/><stop offset="1" stop-color="#4a86cc"/></linearGradient>
<linearGradient id="gIv" x1="0" y1="0" x2="0" y2="1"><stop offset="0" stop-color="#fff"/><stop offset="1" stop-color="#e2e2e2"/></linearGradient>
<radialGradient id="gLens" cx=".4" cy=".35" r=".7"><stop offset="0" stop-color="#f4f9ff"/><stop offset="1" stop-color="#9cc0ea"/></radialGradient>
</defs>
<!-- undo buttons -->
<g transform="translate(314,382)">
<rect x="3.700" y="3.800" width="5" height="6.700" fill="#4a7fca"/>
<path d="M6 10.500V21.500M6 16.300h5.500M6 21.200h6" stroke="#777" stroke-width="1" fill="none"/>
<path d="M7.800 11.300L15.400 4L15.600 8.600C20 8.200 23 11.500 22.700 15.800C22.400 20 18.500 23.200 13.500 23.300C17 22 19 19.500 18.900 17C18.800 14.800 17.300 14 15.500 14.200L15.400 18.900Z" fill="url(#gBlue)" stroke="#1f437e" stroke-width=".8" stroke-linejoin="round"/>
<path d="M11.800 16.300L15 18.900" stroke="#e23838" stroke-width="1.500"/>
<circle cx="13.600" cy="21.200" r="1.900" fill="#f2da00"/>
<path d="M10.500 23.600Q14.500 24.200 18.500 22.600" stroke="#111" stroke-width="1" fill="none"/>
</g>
<g transform="translate(999,423)">
<rect x="3.700" y="3.800" width="5" height="6.700" fill="#4a7fca"/>
<path d="M6 10.500V21.500M6 16.300h5.500M6 21.200h6" stroke="#777" stroke-width="1" fill="none"/>
<path d="M7.800 11.300L15.400 4L15.600 8.600C20 8.200 23 11.500 22.700 15.800C22.400 20 18.500 23.200 13.500 23.300C17 22 19 19.500 18.900 17C18.800 14.800 17.300 14 15.500 14.200L15.400 18.900Z" fill="url(#gBlue)" stroke="#1f437e" stroke-width=".8" stroke-linejoin="round"/>
<path d="M11.800 16.300L15 18.900" stroke="#e23838" stroke-width="1.500"/>
<circle cx="13.600" cy="21.200" r="1.900" fill="#f2da00"/>
<path d="M10.500 23.600Q14.500 24.200 18.500 22.600" stroke="#111" stroke-width="1" fill="none"/>
</g>
<g opacity=".9">
<!-- download -->
<path d="M46.500 531.500h7l1.500 1.500h3v9.500h-11.500z" fill="#8a8a8a" stroke="#666" stroke-width=".6"/>
<path d="M52.600 524.400h6.300v4.900h2.500l-5.650 5.400l-5.650 -5.400h2.500z" fill="url(#gGreen)" stroke="#4f9a1c" stroke-width=".5"/>
<path d="M49.500 535.600h12.600l-2.200 7.500h-12.600z" fill="url(#gFold)" stroke="#3f74b8" stroke-width=".6"/>
<!-- edit -->
<path d="M56.200 552.300l5.900 6.600h-2.600v4.300h-5.800v-4.300h-2.700z" fill="url(#gGreen)" stroke="#4f9a1c" stroke-width=".5"/>
<path d="M47.400 559.200h5.600v4.500h2.900l-5.500 6.500l-5.500 -6.500h2.500z" fill="#4d82c8" stroke="#3768ac" stroke-width=".5"/>
<!-- seal + magnifier -->
<path d="M155.800 525L163.800 524.800L164.500 527L165.500 528.500L165.300 531L165.800 532.500L164.800 534L164.500 536.800L157.500 536.800z" fill="#d02c1e" stroke="#a82014" stroke-width=".5"/>
<path d="M160.500 537l4.300 -.1l.1 4l-2 -1.500l-2.500 1.200l-2.300 .1z" fill="#7a7ad4"/>
<path d="M153.500 538.800l3 4.600" stroke="#9c9c9c" stroke-width="3" stroke-linecap="round"/>
<circle cx="151.600" cy="532" r="6.200" fill="none" stroke="#ececec" stroke-width="1.200"/>
<circle cx="151.600" cy="532" r="5.200" fill="url(#gLens)" stroke="#7fa6d6" stroke-width="1" fill-opacity=".88"/>
<!-- clocks -->
<g transform="translate(201.800,533.800)">
<circle r="8.300" fill="#fff" stroke="#111" stroke-width="1.500"/>
<path d="M0 .3V-5.600M0 .3L3 -2.400" stroke="#111" stroke-width="1.300" fill="none"/>
<path d="M-1.800 -6.600C-4.500 -4.500 -6 -1.500 -6.300 1.500" stroke="#e02020" stroke-width="1.500" fill="none"/>
<path d="M-7.400 0L-4.600 .8L-6.800 3.600z" fill="#e02020"/>
<path d="M6 0h1M0 6v1M-6.800 0h.5" stroke="#555" stroke-width=".7"/>
</g>
<g transform="translate(220.800,561.900)">
<circle r="8.300" fill="#fff" stroke="#111" stroke-width="1.500"/>
<path d="M0 .3V-5.600M0 .3L3 -2.400" stroke="#111" stroke-width="1.300" fill="none"/>
<path d="M-1.800 -6.600C-4.500 -4.500 -6 -1.500 -6.300 1.500" stroke="#e02020" stroke-width="1.500" fill="none"/>
<path d="M-7.400 0L-4.600 .8L-6.800 3.600z" fill="#e02020"/>
<path d="M6 0h1M0 6v1M-6.800 0h.5" stroke="#555" stroke-width=".7"/>
</g>
<!-- pdf -->
<rect x="238.600" y="524.300" width="18.300" height="15.500" rx=".8" fill="#dadada" stroke="#b8b8b8" stroke-width=".7"/>
<rect x="240.300" y="525.800" width="15" height="12.200" fill="#e4e8e6" stroke="#a8a8a8" stroke-width=".5"/>
<rect x="240.600" y="531.300" width="14.400" height="5.800" fill="#fff"/>
<text x="247.900" y="536.600" font-size="6.400" font-weight="bold" text-anchor="middle" fill="#111" style="font-family:'Liberation Sans',sans-serif">PDF</text>
<g fill="#e01414"><ellipse cx="244.700" cy="526.300" rx="1.200" ry=".9"/><ellipse cx="243" cy="528.600" rx="1.100" ry="1"/><ellipse cx="246.800" cy="529" rx="1.600" ry="1.200"/><ellipse cx="249.500" cy="527.700" rx="1.200" ry=".9"/><ellipse cx="250.300" cy="531" rx="1.200" ry="1"/><ellipse cx="246.300" cy="531.600" rx="1.200" ry=".8"/></g>
<path d="M244.800 540h5.800v1.200h-5.800z" fill="#b4b4b4"/><rect x="243.300" y="541" width="9.300" height="2.600" rx="1.300" fill="#d4d4d4" stroke="#a4a4a4" stroke-width=".6"/>
<!-- zoom -->
<ellipse cx="322" cy="541.400" rx="6.500" ry=".9" fill="#8a8a8a" opacity=".55"/>
<path d="M325.200 535.800l5.300 4.500" stroke="#c2c2c2" stroke-width="3.300" stroke-linecap="round"/>
<path d="M326.500 537l.9 -1M328 538.300l.9 -1M329.500 539.600l.9 -1" stroke="#999" stroke-width=".5"/>
<circle cx="321" cy="531.400" r="5.800" fill="#c9dcf2" stroke="#b4b4b4" stroke-width="1.300"/>
<circle cx="321" cy="531.400" r="4.300" fill="none" stroke="#4a7ec8" stroke-width="1.700"/>
<path d="M321 526.800v9.200M316.400 531.400h9.200" stroke="#3468b4" stroke-width="1.800"/>
<!-- interactive viewer -->
<rect x="393.800" y="526.300" width="17.700" height="16" fill="url(#gIv)" stroke="#c4c4c4" stroke-width=".8"/>
<path d="M394.700 528h11.500" stroke="#5f80b4" stroke-width="2"/>
<path d="M397 541.500h13.800" stroke="#f22" stroke-width=".9"/>
<path d="M407.100 541.500l1.300 -9.900l1.300 9.900zM401.900 541.500l1.500 -6.500l1.800 6.500zM399 541.500l.7 -1.500l.7 1.500z" fill="#f00" stroke="#f00" stroke-width=".5"/>
<circle cx="408.400" cy="529.400" r="3" fill="#f4ea30"/><circle cx="408.400" cy="529.400" r="1.100" fill="#fffbe0"/>
<!-- search similar -->
<path d="M261.200 570.600h12" stroke="#f22" stroke-width="1"/>
<path d="M266.500 570.600l1.500 -3.200l1.600 3.200zM262.500 570.600l.8 -1.500l.8 1.500z" fill="#f00"/>
<path d="M272.100 555.300h3" stroke="#44f" stroke-width="1.100"/>
<path d="M273.200 559v5.500" stroke="#f66" stroke-width="1"/>
<path d="M262 567.500l1 1.500" stroke="#55f" stroke-width="1"/>
<path d="M271.200 565.800l4.600 4.400" stroke="#9a9a9a" stroke-width="3.600" stroke-linecap="round"/>
<circle cx="265" cy="559.400" r="7.300" fill="none" stroke="#d6d6d6" stroke-width="1.500"/>
<circle cx="265" cy="559.400" r="6.100" fill="#bcd4f4" stroke="#6c9cda" stroke-width="1"/>
<path d="M262.100 556.500v6.500M264.600 555v8" stroke="#3a50f0" stroke-width="1.200"/>
<path d="M266.500 555.500v7" stroke="#dde8fa" stroke-width="1.200"/>
<path d="M267.300 561v2.500" stroke="#e05070" stroke-width=".8"/>
</g>
</svg>
</div></body></html>
